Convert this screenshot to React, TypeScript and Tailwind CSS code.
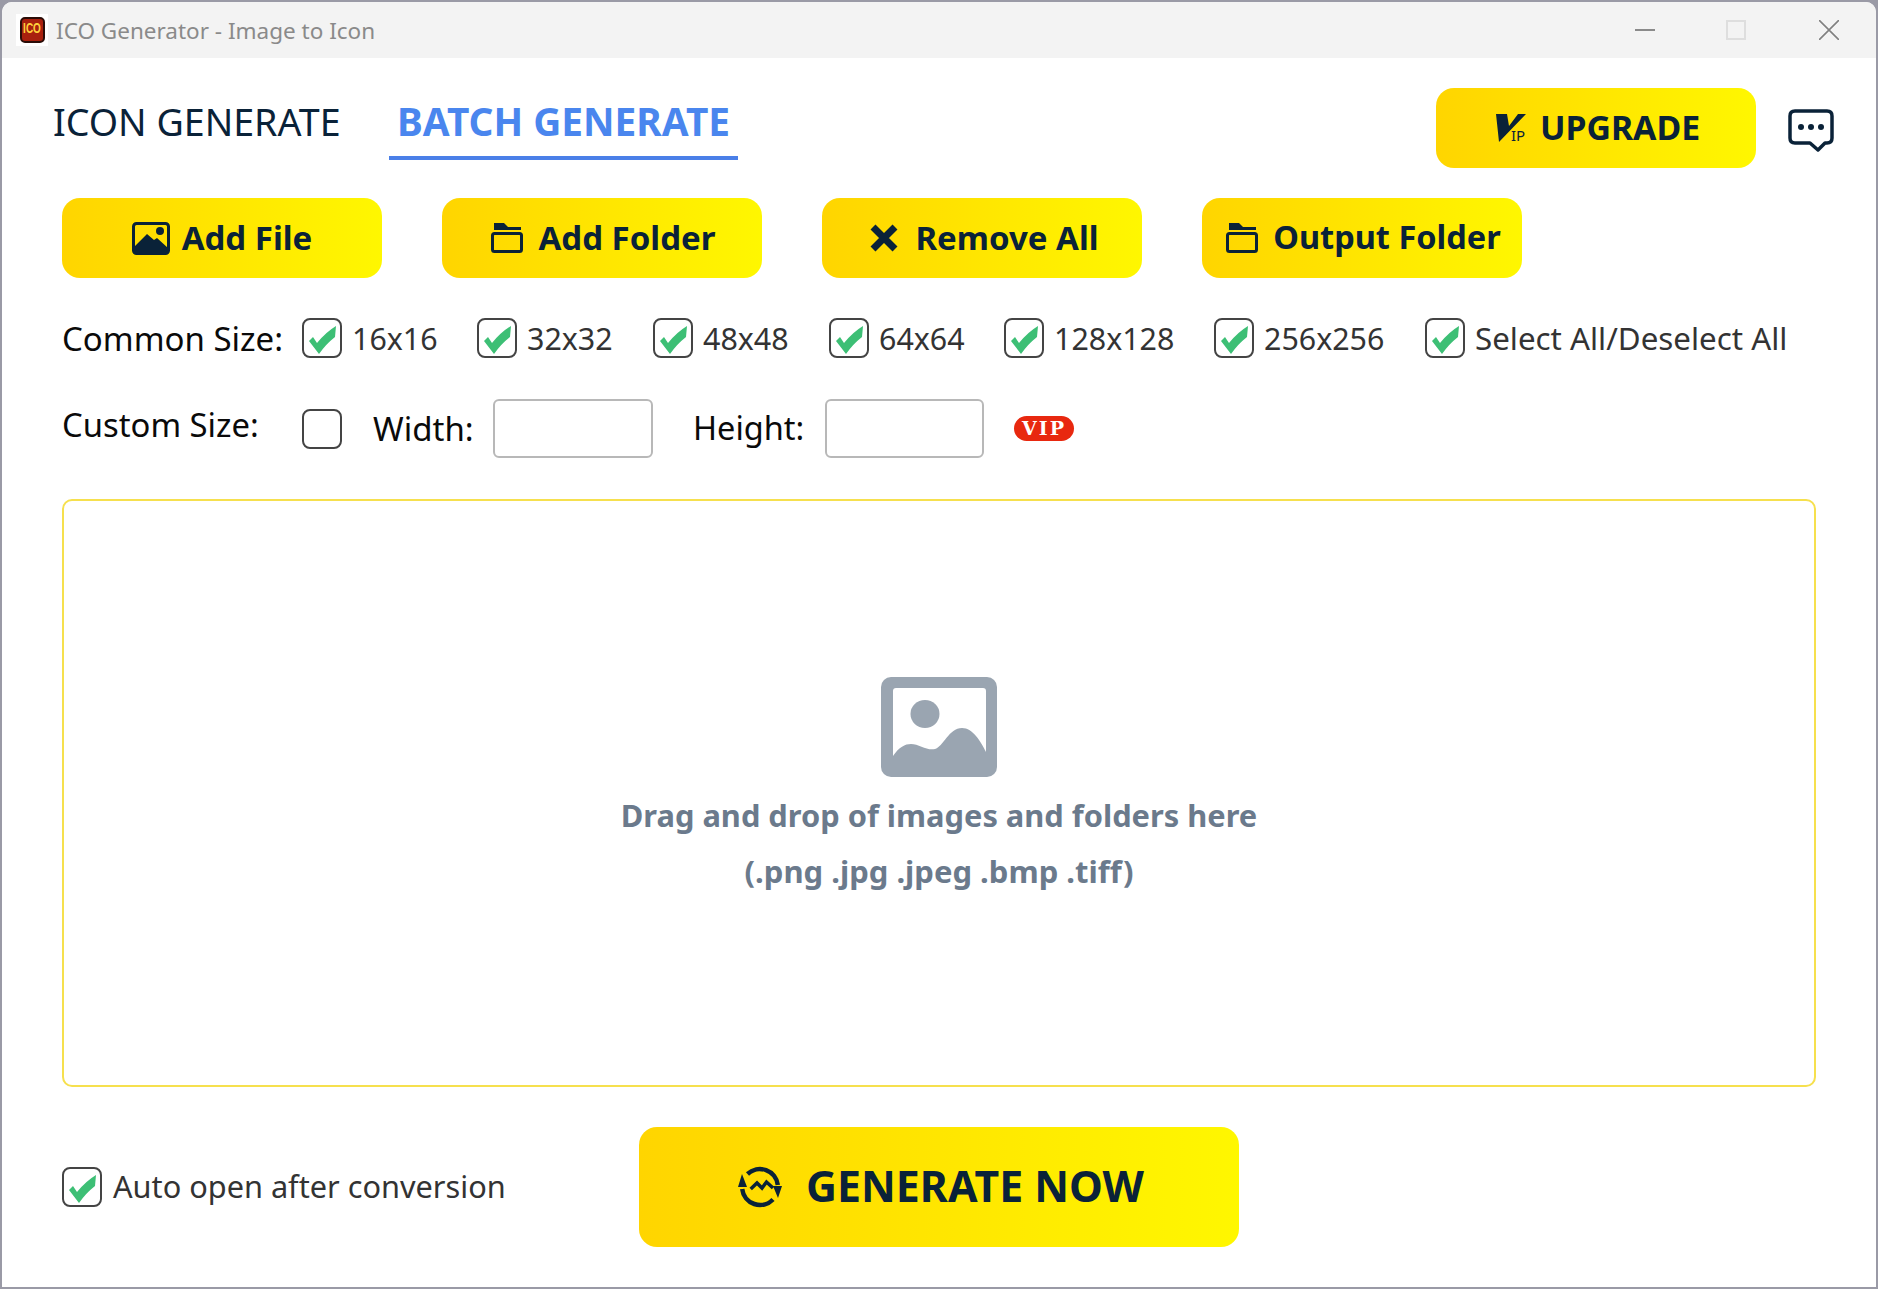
import React from "react";

const Btn = ({ icon, label, gap = "gap-[12px]", size = "text-[33px]", extra = "" }: { icon: React.ReactNode; label: string; gap?: string; size?: string; extra?: string }) => (
  <div className={`w-[320px] h-[80px] rounded-[18px] bg-gradient-to-r from-[#ffd500] to-[#fff700] flex items-center justify-center ${gap} ${size} ${extra} leading-none font-bold text-[#0a2238]`}>
    {icon}
    <span className="-mt-[2px]">{label}</span>
  </div>
);

const Check = ({ checked = true }: { checked?: boolean }) => (
  <div className="w-[40px] h-[40px] shrink-0 rounded-[8px] border-2 border-[#444] bg-white">
    {checked && (
      <svg viewBox="2 2 36 36" className="w-[36px] h-[36px]">
        <path d="M7 23 L11 19 L15 25 Q24 14 34 8 L33 19 Q24 26 17 36 Z" fill="#3dbf75" />
      </svg>
    )}
  </div>
);

const Option = ({ label, w, size = "text-[30.4px]" }: { label: string; w: string; size?: string }) => (
  <div className={`flex items-center gap-[10px] ${w}`}>
    <Check />
    <span className={`${size} pt-[2px] leading-none text-[#333] whitespace-nowrap`}>{label}</span>
  </div>
);

const FolderIcon = () => (
  <svg viewBox="0 0 32 30" className="w-[32px] h-[30px]" fill="none">
    <path d="M3 0 H13 L17 4 H30 V7 H3 Z" fill="#0a2238" />
    <rect x="1.5" y="10.5" width="29" height="18" rx="2" stroke="#0a2238" strokeWidth="3" />
  </svg>
);

const ImageIcon = () => (
  <svg viewBox="0 0 38 33" className="w-[38px] h-[33px]" fill="none">
    <rect x="1.5" y="1.5" width="35" height="30" rx="3" stroke="#0a2238" strokeWidth="3" />
    <path d="M2 25 L15 12 L22 18 L25 16 L36 26 V32 H2 Z" fill="#0a2238" />
    <circle cx="28" cy="9" r="4" fill="#0a2238" />
  </svg>
);

export default function App() {
  return (
    <div className="w-[1878px] h-[1289px] bg-[#9a9aa6] pt-[2px] pl-[2px] font-['Noto_Sans',sans-serif] overflow-hidden">
      <div className="w-[1874px] h-[1285px] bg-white rounded-t-[10px] overflow-hidden">
        <div className="h-[56px] bg-[#f3f3f3] flex items-center">
          <div className="ml-[14px] w-[32px] h-[32px] bg-white flex items-center justify-center">
            <div className="w-[25px] h-[26px] rounded-[5px] bg-[#a8200e] border-2 border-[#2a0c08] flex items-start justify-center pt-[2px] font-['Liberation_Sans',sans-serif]">
              <span className="inline-block origin-top scale-y-150 text-[10px] leading-none font-bold text-[#ffd23c]">ICO</span>
            </div>
          </div>
          <span className="ml-[8px] pt-[2px] text-[22.5px] leading-none text-[#8a8a8a] whitespace-nowrap">ICO Generator - Image to Icon</span>
          <div className="ml-auto flex items-center pr-[37px]">
            <div className="w-[20px] h-[2px] bg-[#8a8a8a]" />
            <div className="ml-[71px] w-[20px] h-[20px] border-2 border-[#dedede]" />
            <svg viewBox="0 0 20 20" className="ml-[73px] w-[20px] h-[20px]" stroke="#808080" strokeWidth="1.6">
              <path d="M0 0 L20 20 M20 0 L0 20" />
            </svg>
          </div>
        </div>

        <div className="pl-[60px]">
          <div className="mt-[30px] -ml-[9px] flex items-start h-[80px] pr-[42px]">
            <div className="pt-[10px] w-[288px] text-[37.6px] leading-[48px] text-[#0a2238] whitespace-nowrap">ICON GENERATE</div>
            <div className="ml-[48px] h-[72px] w-[349px] pt-[9px] border-b-4 border-[#4a7fe8] text-center text-[38.8px] leading-[48px] font-bold text-[#4a86ee] whitespace-nowrap">
              BATCH GENERATE
            </div>
            <div className="ml-auto w-[320px] h-[80px] rounded-[18px] bg-gradient-to-r from-[#ffd500] to-[#fff700] flex items-center justify-center gap-[12px] pl-[4px] text-[33.8px] leading-none font-bold text-[#0a2238]">
              <div className="relative w-[32px] h-[30px]">
                <svg viewBox="0 0 32 30" className="w-[32px] h-[30px]">
                  <path d="M0 1 H11 L13 13 L22 1 H30 L3 29 Z" fill="#0a2238" />
                </svg>
                <span className="absolute left-[15px] bottom-0 text-[15px] leading-none font-normal">IP</span>
              </div>
              <span className="-mt-[1px]">UPGRADE</span>
            </div>
            <svg viewBox="0 0 46 44" className="ml-[32px] mt-[21px] w-[46px] h-[44px]" fill="none">
              <path d="M7 2 H39 Q44 2 44 7 V29 Q44 34 39 34 H37 L30 41 L22 34 H7 Q2 34 2 29 V7 Q2 2 7 2 Z" stroke="#0a2238" strokeWidth="3.5" strokeLinejoin="round" />
              <circle cx="13" cy="18" r="3" fill="#0a2238" />
              <circle cx="23" cy="18" r="3" fill="#0a2238" />
              <circle cx="33" cy="18" r="3" fill="#0a2238" />
            </svg>
          </div>

          <div className="mt-[30px] flex gap-[60px]">
            <Btn label="Add File" icon={<ImageIcon />} />
            <Btn label="Add Folder" icon={<FolderIcon />} gap="gap-[15px]" extra="pl-[3px]" />
            <Btn
              label="Remove All"
              gap="gap-[17px]"
              extra="pl-[5px]"
              icon={
                <svg viewBox="0 0 28 28" className="w-[28px] h-[28px]" stroke="#0a2238" strokeWidth="7">
                  <path d="M3 3 L25 25 M25 3 L3 25" />
                </svg>
              }
            />
            <Btn label="Output Folder" icon={<FolderIcon />} gap="gap-[15px]" size="text-[32.5px]" extra="pl-[3px]" />
          </div>

          <div className="mt-[40px] flex items-center h-[40px]">
            <div className="w-[240px] text-[33px] leading-none text-[#0a0a0a] whitespace-nowrap">Common Size:</div>
            <Option label="16x16" w="w-[175px]" />
            <Option label="32x32" w="w-[176px]" />
            <Option label="48x48" w="w-[176px]" />
            <Option label="64x64" w="w-[175px]" />
            <Option label="128x128" w="w-[210px]" />
            <Option label="256x256" w="w-[211px]" />
            <Option label="Select All/Deselect All" w="w-[380px]" size="text-[31.3px]" />
          </div>

          <div className="mt-[41px] flex items-center h-[59px]">
            <div className="w-[240px] -mt-[7px] text-[32.8px] leading-none text-[#0a0a0a] whitespace-nowrap">Custom Size:</div>
            <Check checked={false} />
            <div className="ml-[31px] w-[120px] text-[33px] leading-none text-[#0a0a0a]">Width:</div>
            <div className="w-[160px] h-[59px] rounded-[6px] border-2 border-[#b8b8b8] bg-white" />
            <div className="ml-[40px] w-[132px] text-[32.5px] leading-none text-[#0a0a0a]">Height:</div>
            <div className="w-[159px] h-[59px] rounded-[6px] border-2 border-[#b8b8b8] bg-white" />
            <div className="ml-[30px] w-[60px] h-[25px] rounded-full bg-[#e8280f] flex items-center justify-center text-[19px] leading-none font-bold tracking-[2px] text-white font-['DejaVu_Serif',serif]">
              VIP
            </div>
          </div>

          <div className="mt-[41px] w-[1754px] h-[588px] rounded-[10px] border-2 border-[#f6e04e] flex flex-col items-center">
            <svg viewBox="0 0 116 100" className="mt-[176px] w-[116px] h-[100px]">
              <rect width="116" height="100" rx="10" fill="#9aa5b1" />
              <path d="M12 14 Q12 11 15 11 H102 Q105 11 105 14 V75 C100 65 92 51 81 51 C68 51 62 70 54 72 C46 74 38 67 30 67 C24 67 18 70 12 79 Z" fill="#fff" />
              <ellipse cx="44" cy="37" rx="14.5" ry="14" fill="#9aa5b1" />
            </svg>
            <div className="mt-[18px] text-[30.8px] leading-[40px] font-bold text-[#6b7a8c] whitespace-nowrap">Drag and drop of images and folders here</div>
            <div className="mt-[16px] text-[31px] leading-[40px] font-bold text-[#6b7a8c] whitespace-nowrap">(.png .jpg .jpeg .bmp .tiff)</div>
          </div>

          <div className="mt-[40px] flex items-center h-[120px]">
            <Check />
            <span className="ml-[11px] -mt-[1px] w-[526px] text-[30.7px] leading-none text-[#333] whitespace-nowrap">Auto open after conversion</span>
            <div className="w-[600px] h-[120px] rounded-[18px] bg-gradient-to-r from-[#ffd500] to-[#fff700] flex items-center justify-center gap-[24px] pl-[4px] text-[42.8px] leading-none font-bold text-[#0a2238]">
              <svg viewBox="0 0 44 44" className="w-[44px] h-[44px]" fill="none" stroke="#0a2238">
                <path d="M9.5 9 A18 18 0 0 1 39.8 20" strokeWidth="4.5" />
                <path d="M35 34.5 A18 18 0 0 1 4.2 24" strokeWidth="4.5" />
                <path d="M35 21 L44 21 L40 33 Z" fill="#0a2238" stroke="none" />
                <path d="M4 9 L0 22 L9 22 Z" fill="#0a2238" stroke="none" />
                <path d="M12.7 24 L19 18 L24 23 L28.5 17 L35 23" strokeWidth="3.5" />
              </svg>
              <span className="-mt-[1px]">GENERATE NOW</span>
            </div>
          </div>
        </div>
      </div>
    </div>
  );
}
